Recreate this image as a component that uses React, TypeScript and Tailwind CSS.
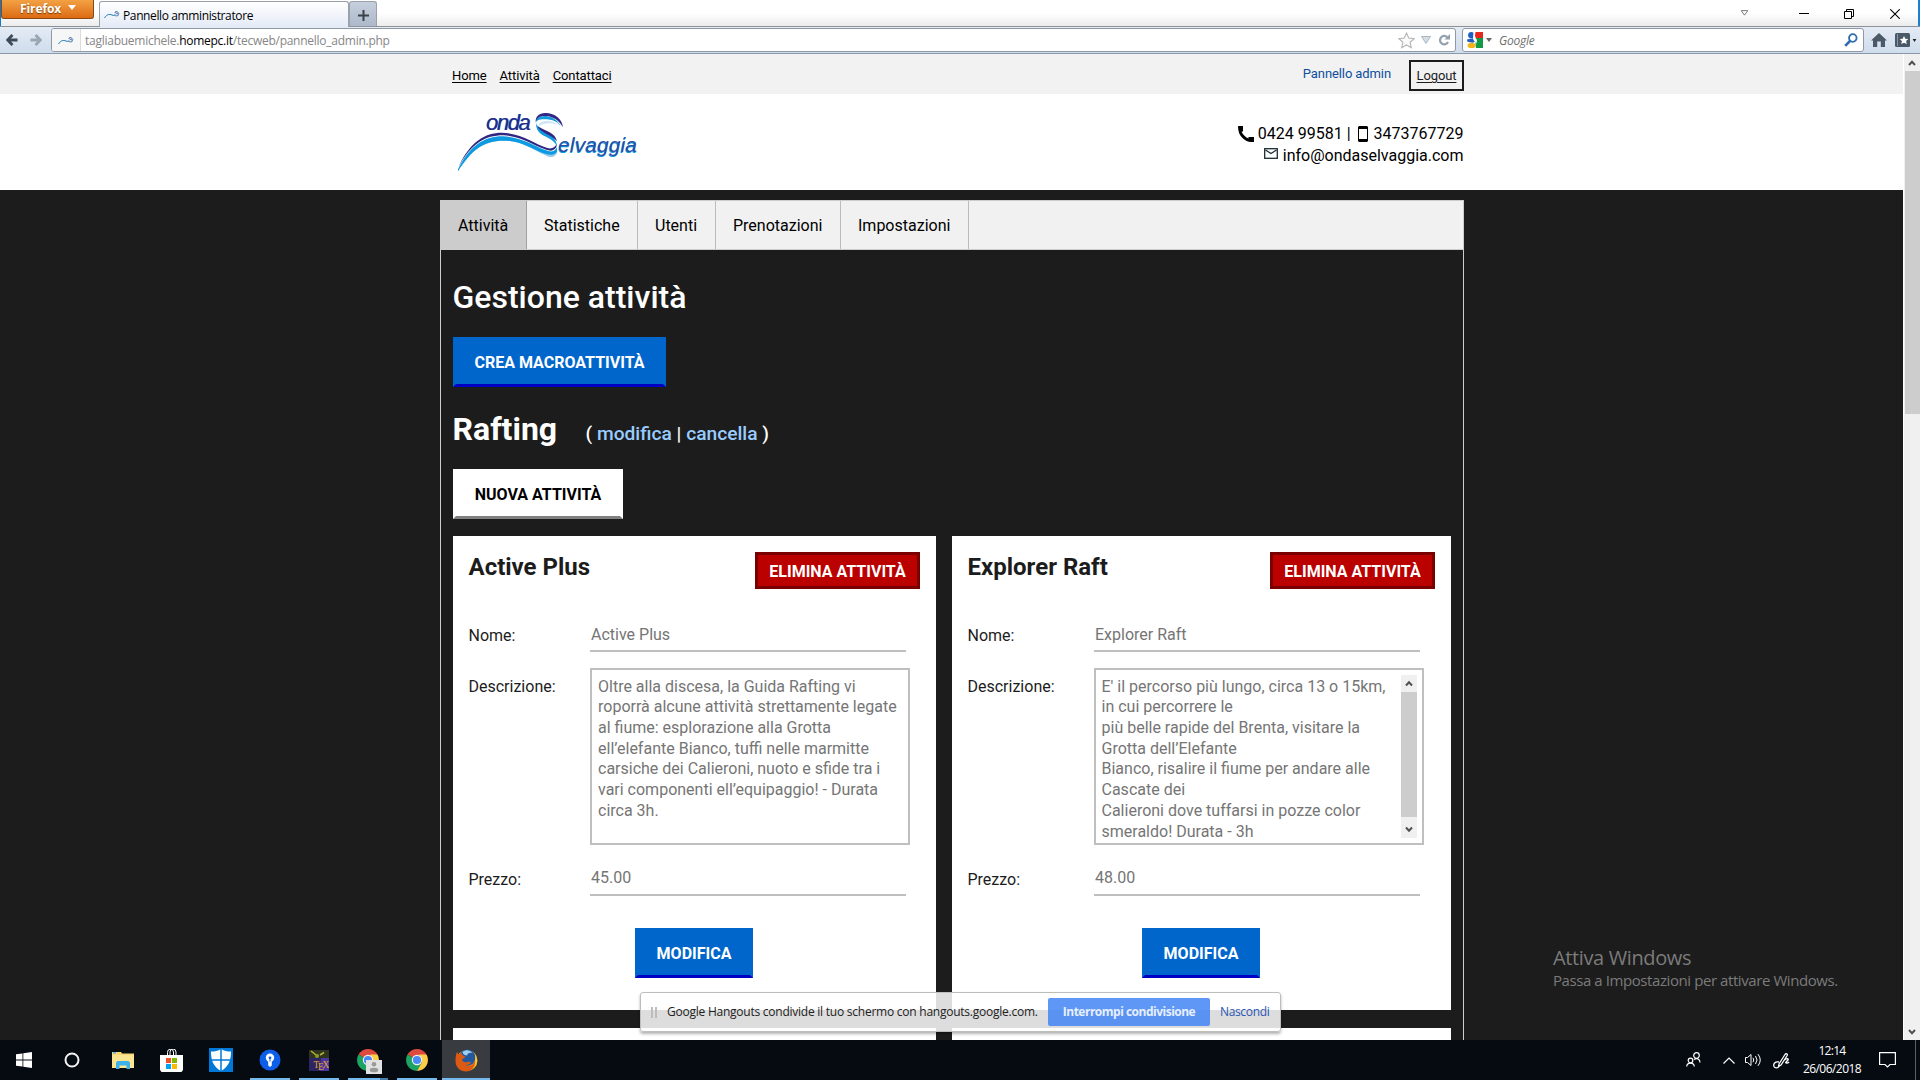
import React from "react";

const UI = "font-['Open_Sans','Noto_Sans',sans-serif]";

function Wave({ className }: { className: string }) {
  return (
    <svg viewBox="0 0 16 9" className={className} fill="none">
      <path d="M.5 8C3 4 5.500 4 8 5c1.800.7 3 .6 3-.6" stroke="#1b79b8" strokeWidth="1" />
      <path d="M15 3.800C14 1.200 11 1 11 2.300s4 1.200 3.500 2.700-3 .6-3.800.5" stroke="#3a63a8" strokeWidth=".9" />
    </svg>
  );
}

function TabStrip() {
  return (
    <div className="flex h-[27px] border-b border-[#8e9399] bg-gradient-to-b from-white from-50% to-[#ececec]">
      <div className="h-[26px] w-[1px] bg-[#0f7bd0]" />
      <div className="flex h-[19px] w-[93px] items-center rounded-b-[3px] border border-t-0 border-[#8a4a17] bg-gradient-to-b from-[#f2a143] to-[#dd6b10] pl-[18px] text-[12px] font-bold tracking-[-0.1px] text-white [text-shadow:0_1px_1px_#7a3a00]">
        <span className="-mt-[1px]">Firefox</span>
        <svg viewBox="0 0 8 5" className="ml-[7px] -mt-[3px] h-[5px] w-[8px]"><path d="M0 0h8L4 5z" fill="#fff" /></svg>
      </div>
      <div className="ml-[5px] mt-[1px] flex h-[26px] w-[250px] items-center rounded-t-[3px] border border-b-0 border-[#9aa1aa] bg-gradient-to-b from-white to-[#e4ebf6] pl-[4px]">
        <Wave className="h-[9px] w-[16px]" />
        <span className="ml-[3px] mt-[2px] whitespace-nowrap text-[12px] tracking-[-0.380px] text-black">Pannello amministratore</span>
      </div>
      <div className="mt-[1px] flex h-[25px] w-[28px] items-center justify-center rounded-t-[3px] border border-b-0 border-[#9aa1aa] bg-gradient-to-b from-[#c6cfdd] to-[#adb9ca]">
        <svg viewBox="0 0 11 11" className="mt-[2px] h-[11px] w-[11px]"><path d="M5.500 0v11M0 5.500h11" stroke="#3a4149" strokeWidth="2" /></svg>
      </div>
      <div className="ml-auto flex items-center pr-[18px]">
        <svg viewBox="0 0 9 7" className="mr-[50px] h-[6px] w-[9px]"><path d="M.7.700h7.600L4.500 6z" fill="none" stroke="#666" /></svg>
        <svg viewBox="0 0 10 10" className="mt-[2px] mr-[35px] h-[10px] w-[10px]"><path d="M0 4.500h10" stroke="#000" /></svg>
        <svg viewBox="0 0 10 10" className="mt-[2px] mr-[36px] h-[10px] w-[10px]" fill="none" stroke="#000"><path d="M.5 2.500h7v7h-7zM2.500 2.500v-2h7v7h-2" /></svg>
        <svg viewBox="0 0 10 10" className="mt-[2px] h-[10px] w-[10px]"><path d="M.3.300l9.400 9.400M9.700.3L.3 9.700" stroke="#000" strokeWidth="1.100" /></svg>
      </div>
      <div className="h-[26px] w-[2px] bg-[#1a7fd0]" />
    </div>
  );
}

function Arrow({ color, className }: { color: string; className: string }) {
  return (
    <svg viewBox="0 0 13 13" className={className}>
      <path d="M7 1L1.700 6.500 7 12M2 6.500h10.500" fill="none" stroke={color} strokeWidth="3" />
    </svg>
  );
}

function Toolbar() {
  return (
    <div className="flex h-[27px] items-center border-b border-[#8b98a9] bg-gradient-to-b from-[#e4ebf5] to-[#cfdcec]">
      <Arrow color="#3d4a57" className="ml-[6px] h-[12px] w-[12px]" />
      <Arrow color="#9ba6b3" className="ml-[12px] h-[12px] w-[12px] rotate-180" />
      <div className="ml-[9px] flex h-[24px] w-[1405px] items-center overflow-hidden rounded-[3px] border border-[#8f99a6] bg-white">
        <div className="flex h-full w-[29px] items-center justify-center border-r border-[#dcdcdc] bg-[#f6f6f6]">
          <Wave className="h-[9px] w-[16px]" />
        </div>
        <span className="ml-[4px] mt-[2px] whitespace-nowrap text-[12px] tracking-[-0.260px] text-[#868686]">
          tagliabuemichele.<span className="text-black">homepc.it</span>/tecweb/pannello_admin.php
        </span>
        <svg viewBox="0 0 16 16" className="ml-auto h-[17px] w-[17px]"><path d="M8 1l2.100 4.700 5.100.6-3.800 3.400 1.100 5L8 12.200l-4.500 2.500 1.100-5L.8 6.300l5.100-.6z" fill="#fafafa" stroke="#b3b3b3" /></svg>
        <svg viewBox="0 0 10 8" className="ml-[6px] h-[8px] w-[10px]"><path d="M.5.500h9L5 7.500z" fill="#d5dde5" stroke="#aab6c2" /></svg>
        <svg viewBox="0 0 12 12" className="ml-[7px] mr-[5px] h-[12px] w-[12px]"><path d="M9.300 3.300A4.200 4.200 0 1 0 10 8" fill="none" stroke="#93a0ad" strokeWidth="2.200" /><path d="M6.500 5.500H12V0z" fill="#93a0ad" /></svg>
      </div>
      <div className="ml-[6px] flex h-[24px] w-[402px] items-center rounded-[3px] border border-[#8f99a6] bg-white pl-[4px] pr-[5px]">
        <svg viewBox="0 0 16 16" className="h-[16px] w-[16px]">
          <path d="M7 0h9v7H9z" fill="#e8261c" /><path d="M8 6h8v10H9z" fill="#149a44" />
          <ellipse cx="4.300" cy="3.200" rx="3.200" ry="3.100" fill="#1f5fc4" /><path d="M0 7.500l6-1.300 2 3.500-2.500 1.100-5-1z" fill="#1f5fc4" />
          <path d="M6.500 0h2L7.800 5l2.200 3-.5 3.500L6.500 8 6 5.500z" fill="#fff" /><ellipse cx="4.600" cy="13.400" rx="4" ry="2.600" fill="#f3b51c" />
        </svg>
        <svg viewBox="0 0 6 4" className="ml-[3px] h-[4px] w-[6px]"><path d="M0 0h6L3 4z" fill="#666" /></svg>
        <span className="ml-[7px] mt-[2px] text-[12px] italic tracking-[-0.25px] text-[#6f6f6f]">Google</span>
        <svg viewBox="0 0 14 14" className="ml-auto h-[14px] w-[14px]" fill="none" stroke="#2f6dad"><circle cx="8.800" cy="5" r="3.800" strokeWidth="1.800" /><path d="M6 8L1.200 12.800" strokeWidth="2.600" /></svg>
      </div>
      <svg viewBox="0 0 16 14" className="ml-[7px] h-[14px] w-[16px]"><path d="M8 0L0 7.500h2V14h4.200V8.500h3.600V14H14V7.500h2z" fill="#4b5868" /></svg>
      <svg viewBox="0 0 15 14" className="ml-[8px] h-[14px] w-[15px]"><rect width="15" height="14" rx="1.500" fill="#4b5868" /><path d="M2.500 1v12" stroke="#8794a3" /><path d="M9 3l1.300 2.700 3 .4-2.200 2 .6 3L9 9.700l-2.700 1.400.6-3-2.200-2 3-.4z" fill="#fff" /></svg>
      <svg viewBox="0 0 5 4" className="ml-[2px] h-[3px] w-[5px]"><path d="M0 0h5L2.500 4z" fill="#222" /></svg>
    </div>
  );
}

function Logo() {
  return (
    <svg viewBox="0 0 660 240" className="h-[80px] w-[220px]">
      <path d="M54 214C90 145 140 122 195 122C255 124 290 158 325 170C340 174 350 165 352 155C335 165 310 152 285 140C245 122 215 117 190 117C130 118 90 150 54 214Z" fill="#9fcbeb" />
      <path d="M54 208C90 135 135 108 190 109C245 110 285 140 325 153C340 158 350 148 351 138L351 156C340 168 325 165 310 160C270 145 240 122 190 122C130 122 95 150 54 214Z" fill="#0c9be0" />
      <path d="M56 200C90 125 135 98 185 98C245 99 285 133 322 144C335 148 345 142 350 132C351 143 343 152 332 152C295 147 250 108 190 106C135 106 95 130 56 200Z" fill="#312783" />
      <path d="M288 68C292 95 350 95 351 140C345 120 320 112 306 104C293 95 288 84 288 68Z" fill="#0c9be0" />
      <path d="M291 76C305 92 346 94 351 124C335 103 300 100 291 76Z" fill="#312783" />
      <path d="M287 70C287 55 300 46 318 48C345 52 358 66 368 90C360 70 345 60 322 58C300 56 288 60 287 70Z" fill="#0c9be0" />
      <path d="M287 66C286 48 299 37 320 39C348 41 366 58 369 82C357 62 345 52 320 48C302 46 291 52 287 66Z" fill="#312783" />
      <path d="M296 72C315 55 340 62 355 76C335 67 315 68 298 78Z" fill="#cfe6f6" />
      <g fontFamily="Liberation Sans" fontStyle="italic">
        <g fontSize="66">
          <text x="137" y="91" textLength="134" fill="#0c9be0">onda</text>
          <text x="139" y="90" textLength="134" fill="#312783">onda</text>
        </g>
        <g fontSize="62">
          <text x="353" y="159" textLength="236" fill="#0c9be0">elvaggia</text>
          <text x="355" y="157" textLength="236" fill="#2a4fa5">elvaggia</text>
        </g>
      </g>
    </svg>
  );
}

function Header() {
  return (
    <>
      <div className="h-[40px] bg-[#f2f2f2]">
        <div className="ml-[440px] flex h-full w-[1024px] justify-between">
          <div className="flex gap-[13px] pl-[12px] pt-[12px] text-[13px] leading-[20px] tracking-[-0.100px] text-black underline underline-offset-2">
            <span>Home</span><span>Attività</span><span>Contattaci</span>
          </div>
          <div className="flex text-[13px] leading-[20px] tracking-[-0.100px]">
            <span className="mr-[18px] pt-[10px] text-[#0d4f9e]">Pannello admin</span>
            <span className="mt-[6px] h-[31px] w-[55px] border-2 border-[#1c1c1c] pt-[4px] text-center text-[#1c1c1c] underline underline-offset-2">Logout</span>
          </div>
        </div>
      </div>
      <div className="h-[96px] bg-white">
        <div className="ml-[440px] flex h-full w-[1024px] justify-between">
          <div className="pt-[6px]"><Logo /></div>
          <div className="flex flex-col items-end pt-[29px] text-[16px] leading-[22px] text-black">
            <div className="flex h-[22px] items-center">
              <svg viewBox="0 0 16 16" className="mr-[4px] h-[16px] w-[16px]"><path d="M0 0h5v5.500H3.500c1.300 3 3.600 5.400 7 7V11H16v5c-5 .3-8.500-1-11-3.500C1.500 9.500 0 5.500 0 0z" /></svg>
              <span>0424 99581 |</span>
              <svg viewBox="0 0 10 16" className="ml-[7px] mr-[6px] h-[16px] w-[10px]"><path d="M1 0h8l1 1v14l-1 1H1l-1-1V1z" /><path d="M1 3h8v10H1z" fill="#fff" /></svg>
              <span className="mr-[0.5px]">3473767729</span>
            </div>
            <div className="flex h-[22px] items-center">
              <svg viewBox="0 0 14 11" className="mr-[5px] -mt-[5px] h-[11px] w-[14px]" fill="none" stroke="#1c2a33" strokeWidth="1.300"><rect x=".7" y=".7" width="12.600" height="9.600" /><path d="M1.500 2L7 5.500 12.500 2" /></svg>
              <span className="mr-[0.5px]">info@ondaselvaggia.com</span>
            </div>
          </div>
        </div>
      </div>
    </>
  );
}

const Chevron = ({ className }: { className: string }) => (
  <svg viewBox="0 0 8 6" className={className}><path d="M1 5l3-3.200L7 5" fill="none" stroke="#505050" strokeWidth="2" /></svg>
);

type Activity = {
  name: string;
  lines: string[];
  price: string;
  scroll?: boolean;
  card: string;
  label: string;
  input: string;
  area: string;
  edit: string;
};

const activities: Activity[] = [
  {
    name: "Active Plus",
    lines: [
      "Oltre alla discesa, la Guida Rafting vi",
      "roporrà alcune attività strettamente legate",
      "al fiume: esplorazione alla Grotta",
      "ell’elefante Bianco, tuffi nelle marmitte",
      "carsiche dei Calieroni, nuoto e sfide tra i",
      "vari componenti ell’equipaggio! - Durata",
      "circa 3h.",
    ],
    price: "45.00",
    card: "w-[483px]",
    label: "w-[121px]",
    input: "w-[316px]",
    area: "w-[320px] pl-[6px]",
    edit: "ml-[166px]",
  },
  {
    name: "Explorer Raft",
    lines: [
      "E' il percorso più lungo, circa 13 o 15km,",
      "in cui percorrere le",
      "più belle rapide del Brenta, visitare la",
      "Grotta dell’Elefante",
      "Bianco, risalire il fiume per andare alle",
      "Cascate dei",
      "Calieroni dove tuffarsi in pozze color",
      "smeraldo! Durata - 3h",
    ],
    price: "48.00",
    scroll: true,
    card: "w-[499px]",
    label: "w-[126px]",
    input: "w-[326px]",
    area: "w-[330px] pl-[5.5px]",
    edit: "ml-[174px]",
  },
];

function Field({ a, label, value, pad }: { a: Activity; label: string; value: string; pad: string }) {
  return (
    <div className="flex h-[32px]">
      <span className={`${a.label} pt-[4px] leading-[24px] text-[#1c1c1c]`}><span className="-ml-[0.5px]">{label}</span></span>
      <span className={`${a.input} ${pad} border-b-2 border-[#bfbfbf] pl-[1px] leading-[24px] text-[#757575]`}>{value}</span>
    </div>
  );
}

function Card({ a }: { a: Activity }) {
  return (
    <div className={`${a.card} h-[474px] shrink-0 bg-white p-4`}>
      <div className="flex h-[37px] items-start justify-between">
        <h3 className="-ml-[0.5px] text-[24px] font-bold leading-[30px] text-[#1c1c1c]">{a.name}</h3>
        <button className="h-[37px] w-[165px] whitespace-nowrap border-[3px] border-[#7a0000] bg-[#bb0000] pt-[2px] text-[16px] font-bold leading-[29px] text-white">ELIMINA ATTIVITÀ</button>
      </div>
      <div className="mt-[31px] text-[16px]">
        <Field a={a} label="Nome:" value={a.name} pad="pt-[3px]" />
        <div className="mb-[19px] mt-[16px] flex h-[177px]">
          <span className={`${a.label} pt-[7px] leading-[24px] text-[#1c1c1c]`}><span className="-ml-[0.5px]">Descrizione:</span></span>
          <div className={`${a.area} flex justify-between overflow-hidden border-2 border-[#bfbfbf] pr-[5px] pt-[6px]`}>
            <div className="whitespace-pre pt-[0.6px] leading-[20.720px] text-[#757575]">
              {a.lines.map((l) => <div key={l}>{l}</div>)}
            </div>
            {a.scroll && (
              <div className="-mt-[1px] flex h-[163px] w-[16px] flex-col items-center bg-[#f0f0f0]">
                <Chevron className="my-[5px] h-[7px] w-[8px]" />
                <div className="h-[125px] w-full bg-[#cdcdcd]" />
                <Chevron className="mt-[9px] h-[7px] w-[8px] rotate-180" />
              </div>
            )}
          </div>
        </div>
        <Field a={a} label="Prezzo:" value={a.price} pad="pt-[2px]" />
        <button className={`${a.edit} mt-[32px] block h-[50px] w-[118px] border-[3px] border-[#0066cc] border-b-[#0000c4] bg-[#0066cc] pt-[2px] text-[16px] font-bold leading-[42px] text-white`}>MODIFICA</button>
      </div>
    </div>
  );
}

const tabs = [
  { t: "Attività", c: "w-[86px] bg-[#cccccc] border-[#a0a0a0]" },
  { t: "Statistiche", c: "w-[111px] border-[#bbbbbb]" },
  { t: "Utenti", c: "w-[78px] border-[#bbbbbb]" },
  { t: "Prenotazioni", c: "w-[125px] border-[#bbbbbb]" },
  { t: "Impostazioni", c: "w-[128px] border-[#bbbbbb]" },
];

function Panel() {
  return (
    <div className="ml-[440px] mt-[10px] h-[841px] w-[1024px] border border-b-0 border-[#cccccc]">
      <div className="flex h-[49px] border-b border-[#cccccc] bg-[#f1f1f1] text-[16px] text-black">
        {tabs.map((x) => (
          <div key={x.t} className={`${x.c} flex items-center border-r pl-[17px] pt-[2px]`}><span>{x.t}</span></div>
        ))}
      </div>
      <div className="pl-[12px] text-white">
        <h2 className="-ml-[0.5px] pt-[27px] text-[32px] font-medium leading-[40px]">Gestione attività</h2>
        <button className="mt-[20px] block h-[50px] w-[213px] border-[3px] border-[#0066cc] border-b-[#0000c4] bg-[#0066cc] pt-[2px] text-[16px] font-bold leading-[42px]">CREA MACROATTIVITÀ</button>
        <div className="mt-[22px] flex h-[40px] items-baseline leading-[40px]">
          <h2 className="-ml-[0.5px] w-[133px] text-[32px] font-bold">Rafting</h2>
          <span className="whitespace-nowrap text-[19.200px] font-medium">( <span className="text-[#99ccff]">modifica</span> | <span className="text-[#99ccff]">cancella</span> )</span>
        </div>
        <button className="mt-[20px] block h-[50px] w-[170px] border-[3px] border-white border-b-[#808080] bg-white pt-[2px] text-[16px] font-bold leading-[42px] text-black">NUOVA ATTIVITÀ</button>
        <div className="mt-[17px] flex gap-4">
          {activities.map((a) => <Card key={a.name} a={a} />)}
        </div>
        <div className="mt-[18px] flex gap-4">
          <div className="h-[13px] w-[483px] bg-white" />
          <div className="h-[13px] w-[499px] bg-white" />
        </div>
      </div>
    </div>
  );
}

function Chrome() {
  return (
    <svg viewBox="0 0 22 22" className="h-[22px] w-[22px]">
      <path d="M11 11L1.500 5.500A11 11 0 0 1 20.500 5.500z" fill="#dd4b3e" /><path d="M1.500 5.500A11 11 0 0 0 11 22l5-8.500L11 11z" fill="#1da462" />
      <path d="M20.500 5.500A11 11 0 0 1 11 22l5-9-3-7.500z" fill="#ffcd46" /><circle cx="11" cy="11" r="5.200" fill="#f4f4f4" /><circle cx="11" cy="11" r="4.100" fill="#4a8af4" />
    </svg>
  );
}

const apps = [
  { k: "explorer", line: "", icon: (
    <svg viewBox="0 0 22 18" className="h-[18px] w-[22px]"><path d="M0 1h9l1 1.500h12V17H0z" fill="#fbd772" /><path d="M0 4h22v13H0z" fill="#fce491" /><path d="M1 1h3v1.500H1z" fill="#47b5ee" /><path d="M4 18v-6.500l1.500-1.500h11L18 11.500V18h-3.500v-3.500h-7V18z" fill="#3fb1ea" /></svg>) },
  { k: "store", line: "", icon: (
    <svg viewBox="0 0 23 23" className="mr-[1px] h-[23px] w-[23px]"><path d="M0 6h23v15l-1.500 2h-20L0 21z" fill="#fff" /><path d="M7.500 6V3.500a3 3 0 0 1 6-.5v3M10 6V3a2.500 2.500 0 0 1 6 0v3" fill="none" stroke="#fff" /><path d="M6 9h5v5H6z" fill="#f25022" /><path d="M12 9h5v5h-5z" fill="#7fba00" /><path d="M6 15h5v5H6z" fill="#00a4ef" /><path d="M12 15h5v5h-5z" fill="#ffb900" /></svg>) },
  { k: "defender", line: "", icon: (
    <svg viewBox="0 0 24 24" className="h-[24px] w-[24px]"><path d="M0 0h24v24H0z" fill="#0078d7" /><path d="M12 1c3 2 6 2.500 10 2.500C22 12 20 18.500 12 23 4 18.500 2 12 2 3.500 6 3.500 9 3 12 1z" fill="#fff" /><path d="M12 0v24M1 12h22" stroke="#0078d7" strokeWidth="1.500" /></svg>) },
  { k: "maps", line: "bg-[#76b9ed] w-[40px]", icon: (
    <svg viewBox="0 0 22 22" className="h-[22px] w-[22px]"><circle cx="11" cy="11" r="10.500" fill="#0d5fe8" /><path d="M9.200 11.500h3.600V16.500l-1.800 1.500-1.800-1.500z" fill="#fff" /><circle cx="11" cy="8.800" r="4.200" fill="#fff" /><circle cx="11" cy="8.800" r="1.400" fill="#0d5fe8" /><path d="M11 9v3.500" stroke="#0d5fe8" strokeWidth="1" /></svg>) },
  { k: "tex", line: "bg-[#76b9ed] w-[40px]", icon: (
    <svg viewBox="0 0 20 21" className="h-[21px] w-[20px]">
      <path d="M0 0h20v21H0z" fill="#2d2463" /><path d="M0 0h20v8H0z" fill="#2f3420" /><path d="M12 8h8v13h-9z" fill="#49369a" />
      <path d="M2 1l5 4M11 5l4-2.500" stroke="#b5b52c" strokeWidth="1.500" /><circle cx="8" cy="6" r="2" fill="#8b9a26" />
      <g fontFamily="Liberation Serif" fontSize="9.500" fill="#e5a63c"><text x="4.500" y="17.500">T</text><text x="9" y="20">E</text><text x="13.500" y="17.500">X</text></g>
    </svg>) },
  { k: "chrome-profile", line: "bg-gradient-to-r from-[#76b9ed] from-80% to-[#4a7da8] to-80% w-[40px]", icon: (
    <div className="relative -left-[0.5px]"><Chrome /><svg viewBox="0 0 16 14" className="absolute left-[9px] top-[11px] h-[14px] w-[16px]"><path d="M0 0h16v14H0z" fill="#e2e2e2" /><circle cx="8" cy="4.300" r="2.300" fill="#999" /><ellipse cx="8" cy="10" rx="4.300" ry="2.300" fill="#999" /></svg></div>) },
  { k: "chrome", line: "bg-[#76b9ed] w-[40px]", icon: <Chrome /> },
  { k: "firefox", line: "bg-[#76b9ed] w-[48px]", icon: (
    <svg viewBox="0 0 23 23" className="h-[23px] w-[23px]">
      <circle cx="12" cy="11.500" r="10.500" fill="#f2a51e" /><circle cx="12.200" cy="8.700" r="8.200" fill="#22599e" />
      <path d="M7.500 3c3-2.800 7.500-2.300 10 1-3-.5-4.500 0-5.500 2.500-2 0-4-.8-4.500-3.500z" fill="#9ccdf0" />
      <path d="M2 3l1.500 2.300L7 4.500c0 1.500.8 2.300 3.300 3l-.8 1.500-2.500 1c.2 2.800 3 4 5.500 3 1.500-.6 2.500-.5 3.500.5-1 2-3.500 3-6 2.300 4.500 2.700 9 .2 10-5.300.8 6.500-3.500 12-9 12C5 22.500.5 18 .5 12 .5 8 1 5 2 3z" fill="#dd5a12" />
      <path d="M20 5c2.500 4 2.500 9 0 12.500.8-4 .8-8 0-12.500z" fill="#ffd84a" />
    </svg>) },
];

function Taskbar() {
  return (
    <div className="flex h-[40px] bg-[#060b12] text-white">
      <div className="flex w-[48px] items-center justify-center">
        <svg viewBox="0 0 16 16" className="h-[16px] w-[16px]" fill="#fff"><path d="M0 2.300L6.500 1.400v6.200H0zM7.300 1.200L16 0v7.600H7.300zM0 8.400h6.500v6.200L0 13.700zM7.300 8.400H16V16l-8.700-1.200z" /></svg>
      </div>
      <div className="flex w-[48px] items-center justify-center">
        <svg viewBox="0 0 16 16" className="h-[16px] w-[16px]"><circle cx="8" cy="8" r="6.500" fill="none" stroke="#f2f2f2" strokeWidth="2" /></svg>
      </div>
      <div className="ml-[3px] flex gap-[1px]">
        {apps.map((a) => (
          <div key={a.k} className={`${a.k === "firefox" ? "bg-[#383b40]" : ""} flex h-[40px] w-[48px] flex-col items-center`}>
            <div className="flex h-[38px] items-center justify-center pt-[2px]">{a.icon}</div>
            <div className={`${a.line} h-[2px]`} />
          </div>
        ))}
      </div>
      <div className="ml-auto flex items-center">
        <svg viewBox="0 0 15 15" className="mr-[22px] -mt-[1px] h-[15px] w-[15px]" fill="none" stroke="#fff" strokeWidth="1.200"><circle cx="10.500" cy="3.500" r="2.800" /><circle cx="4.500" cy="8.500" r="2.300" /><path d="M.7 14.500c.3-4.500 7.300-4.500 7.600 0M8 7.500c3-2 6-.5 6 3" /></svg>
        <svg viewBox="0 0 12 7" className="mr-[10px] h-[7px] w-[12px]" fill="none" stroke="#fff" strokeWidth="1.200"><path d="M.5 6.500L6 1l5.500 5.500" /></svg>
        <svg viewBox="0 0 17 14" className="mr-[11px] h-[14px] w-[17px]" fill="none" stroke="#fff"><path d="M.5 4.500h2l3.500-3v11l-3.500-3h-2zM8 4.800q1.500 2.200 0 4.400M10.500 3q3 4 0 8M13 1.200q4.500 5.800 0 11.600" /></svg>
        <svg viewBox="0 0 17 17" className="mr-[12px] h-[17px] w-[17px]" fill="none" stroke="#fff" strokeWidth="1.300"><path d="M6 12L12 2.500c1-1.500 3-.5 2.200 1L8 13l-2.500 1.500zM11.500 8c2-2 4.500-1.500 3.500 0-1 1.200-3.500 3-1.500 3s2-.5 2.500-1M6 10c-4-1-6 2-5 4.500 1 2 4 1.500 5 0" /></svg>
        <div className="w-[60px] text-center text-[12px] leading-[18px]">
          <div className="tracking-[-0.700px]">12:14</div>
          <div className="whitespace-nowrap tracking-[-0.550px]">26/06/2018</div>
        </div>
        <svg viewBox="0 0 17 16" className="ml-[17px] mr-[19px] h-[16px] w-[17px]" fill="none" stroke="#fff" strokeWidth="1.200"><path d="M.6.600h15.800v11.900h-5.400L8.500 15 6 12.500H.6z" /></svg>
        <div className="mr-[4px] h-[40px] w-[1px] bg-[#5b6066]" />
      </div>
    </div>
  );
}

export default function App() {
  return (
    <div className="relative flex h-[1080px] w-[1920px] flex-col overflow-hidden bg-[#1c1c1c]">
      <div className={UI}>
        <TabStrip />
        <Toolbar />
      </div>
      <div className="flex h-[986px]">
        <div className="h-[986px] w-[1903px] overflow-hidden bg-[#1c1c1c] font-['Roboto',sans-serif]">
          <Header />
          <Panel />
        </div>
        <div className="flex w-[17px] flex-col items-center border-l border-white bg-[#f0f0f0]">
          <Chevron className="mb-[5px] mt-[6px] h-[6px] w-[8px]" />
          <div className="h-[343px] w-[15px] bg-[#cdcdcd]" />
          <Chevron className="mb-[5px] mt-auto h-[6px] w-[8px] rotate-180" />
        </div>
      </div>
      <div className={UI}><Taskbar /></div>

      <div className={`${UI} absolute left-[1553px] top-[944px] whitespace-nowrap text-[#7b7b7b]`}>
        <div className="text-[20px] leading-[28px] tracking-[-0.370px]">Attiva Windows</div>
        <div className="-mt-[1px] text-[15px] leading-[18px] tracking-[-0.420px]">Passa a Impostazioni per attivare Windows.</div>
      </div>

      <div className={`${UI} absolute left-[640px] top-[992px] flex h-[40px] w-[641px] items-center rounded-[3px] border border-[#bdbdbd] bg-white/85 text-[12px] shadow-[0_2px_3px_rgba(0,0,0,0.3)]`}>
        <div className="ml-[10px] flex gap-[2px]"><div className="h-[11px] w-[2px] bg-[#bdbdbd]" /><div className="h-[11px] w-[2px] bg-[#bdbdbd]" /></div>
        <span className="ml-[10px] w-[381px] whitespace-nowrap tracking-[-0.240px] text-[#222]">Google Hangouts condivide il tuo schermo con hangouts.google.com.</span>
        <div className="flex h-[28px] w-[162px] items-center justify-center whitespace-nowrap rounded-[2px] bg-[#4285f4]/85 font-bold tracking-[-0.500px] text-white/85">Interrompi condivisione</div>
        <span className="ml-[10px] tracking-[-0.350px] text-[#2a56b5]">Nascondi</span>
      </div>
    </div>
  );
}
